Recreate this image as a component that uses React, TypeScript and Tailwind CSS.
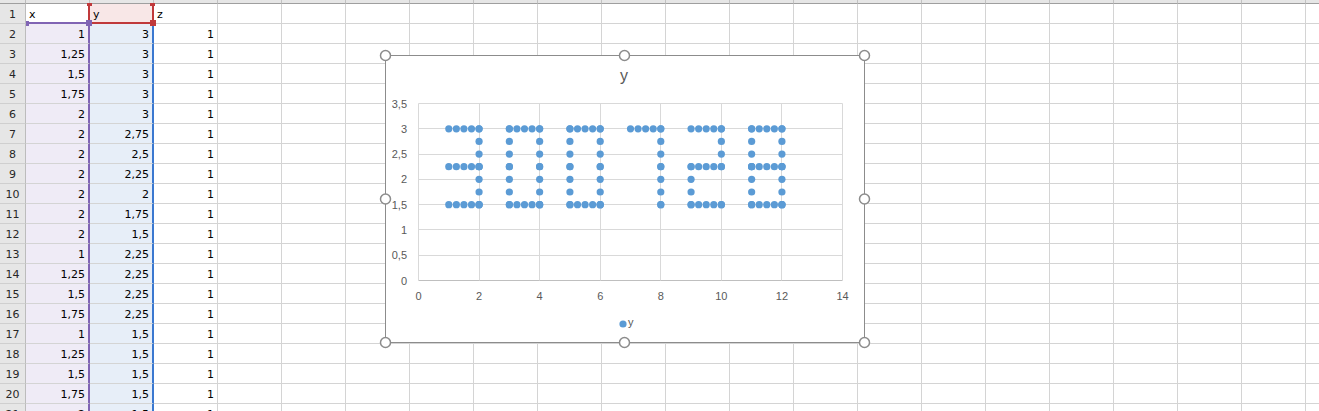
import React from "react";

const COLS = 21;
const ROWS = 21;

const xs = ["1", "1,25", "1,5", "1,75", "2", "2", "2", "2", "2", "2", "2", "1", "1,25", "1,5", "1,75", "1", "1,25", "1,5", "1,75", "2"];
const ys = ["3", "3", "3", "3", "3", "2,75", "2,5", "2,25", "2", "1,75", "1,5", "2,25", "2,25", "2,25", "2,25", "1,5", "1,5", "1,5", "1,5", "1,5"];

// seven-segment-ish digits drawn with 0.25 steps
type Seg = "t" | "m" | "b" | "lu" | "ll" | "ru" | "rl";
const digits: { a: number; segs: Seg[] }[] = [
  { a: 1, segs: ["t", "m", "b", "ru", "rl"] },
  { a: 3, segs: ["t", "b", "lu", "ll", "ru", "rl"] },
  { a: 5, segs: ["t", "b", "lu", "ll", "ru", "rl"] },
  { a: 7, segs: ["t", "ru", "rl"] },
  { a: 9, segs: ["t", "ru", "m", "ll", "b"] },
  { a: 11, segs: ["t", "m", "b", "lu", "ll", "ru", "rl"] },
];

function buildPoints() {
  const pts: [number, number][] = [];
  const steps = [0, 0.25, 0.5, 0.75, 1];
  digits.forEach(({ a, segs }) => {
    segs.forEach((s) => {
      if (s === "t") steps.forEach((d) => pts.push([a + d, 3]));
      if (s === "m") steps.forEach((d) => pts.push([a + d, 2.25]));
      if (s === "b") steps.forEach((d) => pts.push([a + d, 1.5]));
      if (s === "lu") steps.slice(0, 4).forEach((d) => pts.push([a, 3 - d]));
      if (s === "ll") steps.slice(0, 4).forEach((d) => pts.push([a, 2.25 - d]));
      if (s === "ru") steps.slice(0, 4).forEach((d) => pts.push([a + 1, 3 - d]));
      if (s === "rl") steps.slice(0, 4).forEach((d) => pts.push([a + 1, 2.25 - d]));
    });
  });
  pts.push([12, 1.5], [2, 1.5], [4, 1.5], [6, 1.5], [8, 1.5], [10, 1.5]);
  return pts;
}

const px = (x: number) => 33.5 + 30.286 * x;
const py = (y: number) => 225.5 - 50.571 * y;

function Chart() {
  const points = buildPoints();
  const yTicks = [0, 0.5, 1, 1.5, 2, 2.5, 3, 3.5];
  const xTicks = [0, 2, 4, 6, 8, 10, 12, 14];
  const handles = [
    [0.5, 0.5], [239.5, 0.5], [479.5, 0.5],
    [0.5, 144], [479.5, 144],
    [0.5, 287.5], [239.5, 287.5], [479.5, 287.5],
  ];

  return (
    <div className="absolute left-[385px] top-[55px] w-[480px] h-[288px] border border-[#8c8c8c] bg-white">
      <svg
        width={480}
        height={288}
        className="absolute -left-px -top-px overflow-visible"
      >
        {/* title */}
        <text
          x={239}
          y={25.5}
          textAnchor="middle"
          className="font-['Liberation_Sans',Arial,sans-serif] text-[16px] fill-[#595959]"
        >
          y
        </text>

        {/* gridlines */}
        {yTicks.map((t) => (
          <line
            key={"h" + t}
            x1={px(0)}
            x2={px(14)}
            y1={Math.round(py(t) - 0.5) + 0.5}
            y2={Math.round(py(t) - 0.5) + 0.5}
            stroke={t === 0 ? "#bfbfbf" : "#d9d9d9"}
            strokeWidth={1}
          />
        ))}
        {xTicks.map((t) => (
          <line
            key={"v" + t}
            x1={Math.round(px(t) - 0.5) + 0.5}
            x2={Math.round(px(t) - 0.5) + 0.5}
            y1={py(3.5)}
            y2={py(0)}
            stroke="#d9d9d9"
            strokeWidth={1}
          />
        ))}

        {/* axis labels */}
        {yTicks.map((t) => (
          <text
            key={"yl" + t}
            x={22}
            y={py(t) + 4}
            textAnchor="end"
            className="font-['Liberation_Sans',Arial,sans-serif] text-[11px] fill-[#595959]"
          >
            {String(t).replace(".", ",")}
          </text>
        ))}
        {xTicks.map((t) => (
          <text
            key={"xl" + t}
            x={px(t)}
            y={245}
            textAnchor="middle"
            className="font-['Liberation_Sans',Arial,sans-serif] text-[11px] fill-[#595959]"
          >
            {t}
          </text>
        ))}

        {/* series */}
        {points.map(([x, y], i) => (
          <circle key={i} cx={px(x)} cy={py(y)} r={3.6} fill="#5b9bd5" />
        ))}

        {/* legend */}
        <circle cx={238} cy={269} r={3.6} fill="#5b9bd5" />
        <text
          x={243}
          y={271}
          className="font-['Liberation_Sans',Arial,sans-serif] text-[11px] fill-[#595959]"
        >
          y
        </text>

        {/* selection handles */}
        {handles.map(([cx, cy], i) => (
          <circle
            key={"hd" + i}
            cx={cx}
            cy={cy}
            r={5}
            fill="#ffffff"
            stroke="#8c8c8c"
            strokeWidth={1.5}
          />
        ))}
      </svg>
    </div>
  );
}

function cellContent(row: number, col: number) {
  if (row === 1) {
    if (col === 0) return "x";
    if (col === 1) return "y";
    if (col === 2) return "z";
    return "";
  }
  const i = row - 2;
  if (col === 0) return xs[i] ?? "";
  if (col === 1) return ys[i] ?? "";
  if (col === 2) return "1";
  return "";
}

// background + borders, incl. the coloured chart data ranges
function cellStyle(row: number, col: number) {
  if (row === 1 && col === 0)
    return "bg-white border-r-2 border-b-2 border-r-[#c0393b] border-b-[#8064b4]";
  if (row === 1 && col === 1)
    return "bg-[#f8e7e7] border-r-2 border-b-2 border-[#c0393b]";
  if (row >= 2 && col === 0)
    return "bg-[#efebf6] border-r-2 border-b border-r-[#8064b4] border-b-[#d4d4d4]";
  if (row >= 2 && col === 1)
    return "bg-[#e7eef8] border-r-2 border-b border-r-[#3a78d0] border-b-[#d4d4d4]";
  return "bg-white border-r border-b border-[#d4d4d4]";
}

export default function App() {
  const rows = Array.from({ length: ROWS }, (_, i) => i + 1);
  const cols = Array.from({ length: COLS }, (_, i) => i);

  return (
    <div className="relative w-[1319px] h-[411px] overflow-hidden bg-white font-['DejaVu_Sans',Verdana,sans-serif] text-[11px] text-black">
      <div className="grid grid-cols-[26px_repeat(21,64px)]">
        {/* column header strip, scrolled mostly out of view */}
        <div className="h-[4px] bg-[#e6e6e6] border-r border-b border-r-[#bcbcbc] border-b-[#9f9f9f]" />
        {cols.map((c) => (
          <div
            key={"ch" + c}
            className="h-[4px] bg-[#e6e6e6] border-r border-b border-r-[#c2c2c2] border-b-[#9f9f9f]"
          />
        ))}

        {rows.map((r) => (
          <React.Fragment key={r}>
            <div className="h-[20px] bg-[#e6e6e6] border-r border-b border-r-[#bcbcbc] border-b-[#cfcfcf] text-center text-[#262626] pt-[2px] leading-[17px]">
              {r}
            </div>
            {cols.map((c) => (
              <div
                key={c}
                className={`h-[20px] pt-[2px] leading-[17px] overflow-hidden whitespace-nowrap ${cellStyle(r, c)} ${
                  r >= 2 ? "text-right pr-[3px]" : "text-left pl-[3px]"
                }`}
              >
                {cellContent(r, c)}
              </div>
            ))}
          </React.Fragment>
        ))}
      </div>

      {/* range corner handles */}
      <div className="absolute left-[26px] top-[21px] w-[3px] h-[5px] bg-[#8064b4]" />
      <div className="absolute left-[87px] top-[3px] w-[5px] h-[3px] bg-[#c0393b]" />
      <div className="absolute left-[150px] top-[3px] w-[5px] h-[3px] bg-[#c0393b]" />
      <div className="absolute left-[86px] top-[20px] w-[6px] h-[6px] bg-[#8064b4]" />
      <div className="absolute left-[150px] top-[20px] w-[6px] h-[6px] bg-[#c0393b]" />

      <Chart />
    </div>
  );
}
